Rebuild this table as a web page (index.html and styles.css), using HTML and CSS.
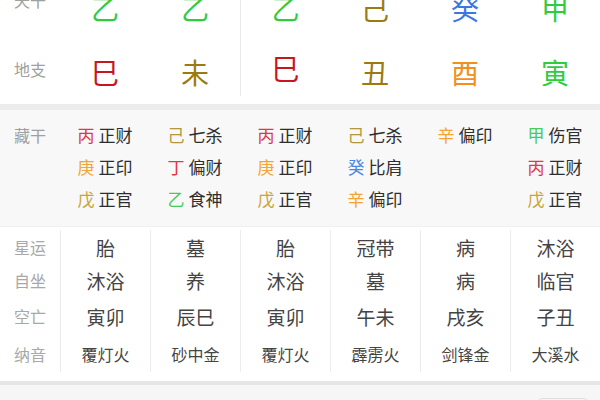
FILE: index.html
```html
<!DOCTYPE html>
<html lang="zh">
<head>
<meta charset="utf-8">
<link rel="stylesheet" href="styles.css">
</head>
<body>
<div class="page">
  <section class="top">
    <div class="row big">
      <div class="lab up1">天干</div>
      <div class="c g">乙</div>
      <div class="c g">乙</div>
      <div class="c g div">乙</div>
      <div class="c o">己</div>
      <div class="c b">癸</div>
      <div class="c g">甲</div>
    </div>
    <div class="row big">
      <div class="lab up2">地支</div>
      <div class="c r">巳</div>
      <div class="c o">未</div>
      <div class="c r div">巳</div>
      <div class="c o">丑</div>
      <div class="c y">酉</div>
      <div class="c g">寅</div>
    </div>
  </section>
  <div class="band"></div>
  <section class="hidden">
    <div class="lab">藏干</div>
    <div class="col">
      <div class="hs"><span class="s-r">丙</span> 正财</div>
      <div class="hs"><span class="s-y">庚</span> 正印</div>
      <div class="hs"><span class="s-w">戊</span> 正官</div>
    </div>
    <div class="col">
      <div class="hs"><span class="s-o">己</span> 七杀</div>
      <div class="hs"><span class="s-r">丁</span> 偏财</div>
      <div class="hs"><span class="s-g">乙</span> 食神</div>
    </div>
    <div class="col">
      <div class="hs"><span class="s-r">丙</span> 正财</div>
      <div class="hs"><span class="s-y">庚</span> 正印</div>
      <div class="hs"><span class="s-w">戊</span> 正官</div>
    </div>
    <div class="col">
      <div class="hs"><span class="s-o">己</span> 七杀</div>
      <div class="hs"><span class="s-b">癸</span> 比肩</div>
      <div class="hs"><span class="s-y">辛</span> 偏印</div>
    </div>
    <div class="col">
      <div class="hs"><span class="s-y">辛</span> 偏印</div>
    </div>
    <div class="col">
      <div class="hs"><span class="s-g">甲</span> 伤官</div>
      <div class="hs"><span class="s-r">丙</span> 正财</div>
      <div class="hs"><span class="s-w">戊</span> 正官</div>
    </div>
  </section>
  <section class="info">
    <div class="icol labs">
      <div class="ic r1">星运</div>
      <div class="ic r2">自坐</div>
      <div class="ic r3">空亡</div>
      <div class="ic r4">纳音</div>
    </div>
    <div class="icol">
      <div class="ic r1">胎</div><div class="ic r2">沐浴</div><div class="ic r3">寅卯</div><div class="ic r4 sm">覆灯火</div>
    </div>
    <div class="icol">
      <div class="ic r1">墓</div><div class="ic r2">养</div><div class="ic r3">辰巳</div><div class="ic r4 sm">砂中金</div>
    </div>
    <div class="icol">
      <div class="ic r1">胎</div><div class="ic r2">沐浴</div><div class="ic r3">寅卯</div><div class="ic r4 sm">覆灯火</div>
    </div>
    <div class="icol">
      <div class="ic r1">冠带</div><div class="ic r2">墓</div><div class="ic r3">午未</div><div class="ic r4 sm">霹雳火</div>
    </div>
    <div class="icol">
      <div class="ic r1">病</div><div class="ic r2">病</div><div class="ic r3">戌亥</div><div class="ic r4 sm">剑锋金</div>
    </div>
    <div class="icol">
      <div class="ic r1">沐浴</div><div class="ic r2">临官</div><div class="ic r3">子丑</div><div class="ic r4 sm">大溪水</div>
    </div>
  </section>
  <div class="band2"></div>
  <section class="foot">
    <span class="ft">起运：出生后 3年 8个月 起运</span>
    <span class="ft right">大运</span>
    <span class="btn">切换</span>
  </section>
</div>
</body>
</html>
```
FILE: styles.css
```css
html, body {
  margin: 0;
  padding: 0;
  background: #fff;
}
.page {
  width: 600px;
  height: 400px;
  overflow: hidden;
  font-family: "Noto Sans CJK SC", "Noto Sans", sans-serif;
}
.top {
  margin-top: -24px;
}
.row {
  display: grid;
  grid-template-columns: 60px repeat(6, 90px);
  height: 64px;
  align-items: stretch;
}
.lab {
  font-size: 16px;
  color: #a0a0a0;
  display: flex;
  align-items: center;
  justify-content: center;
}
.lab.up1 {
  padding-bottom: 16px;
}
.lab.up2 {
  padding-bottom: 6px;
}
.c {
  display: flex;
  align-items: center;
  justify-content: center;
  font-size: 28px;
}
.c.div {
  border-left: 1px solid #e8e8e8;
}
.row:last-child .c.div {
  margin-bottom: 8px;
}
.g { color: #2fcc3c; }
.r { color: #c8161e; }
.o { color: #9c7a12; }
.b { color: #3a78e0; }
.y { color: #f09020; }
.band {
  height: 6px;
  background: #ececec;
}
.hidden {
  background: #f8f8f8;
  display: grid;
  grid-template-columns: 60px repeat(6, 90px);
  padding: 9px 0 11px;
  border-bottom: 1px solid #f0f0f0;
}
.hidden .lab {
  align-items: flex-start;
  height: 32px;
  line-height: 32px;
}
.col {
  display: flex;
  flex-direction: column;
  align-items: center;
}
.hs {
  height: 32px;
  line-height: 32px;
  font-size: 17px;
  color: #2e2e2e;
  white-space: nowrap;
}
.s-r { color: #e0383c; }
.s-y { color: #f2a532; }
.s-w { color: #c9a338; }
.s-o { color: #b3973f; }
.s-g { color: #45cc5a; }
.s-b { color: #4a86e6; }
.info {
  display: grid;
  grid-template-columns: 60px repeat(6, 90px);
  padding: 3px 0 9px;
  background: #fff;
}
.icol {
  display: flex;
  flex-direction: column;
  border-left: 1px solid #ececec;
}
.icol.labs {
  border-left: none;
}
.ic {
  display: flex;
  align-items: center;
  justify-content: center;
  font-size: 19px;
  color: #444;
}
.labs .ic {
  font-size: 16px;
  color: #a8a8a8;
}
.ic.sm {
  font-size: 16px;
}
.r1 { height: 34px; }
.r2 { height: 32px; }
.r3 { height: 40px; }
.r4 { height: 36px; }
.band2 {
  height: 4px;
  background: #e6e6e6;
}
.foot {
  background: #f6f6f6;
  height: 40px;
  display: flex;
  align-items: flex-start;
  padding: 13px 12px 0;
  gap: 12px;
}
.ft {
  font-size: 16px;
  color: #c4c4c4;
  line-height: 20px;
}
.ft.right {
  margin-left: auto;
}
.btn {
  font-size: 14px;
  color: #c4c4c4;
  border: 1px solid #dedede;
  border-radius: 4px;
  padding: 0 10px;
  line-height: 20px;
}
```
